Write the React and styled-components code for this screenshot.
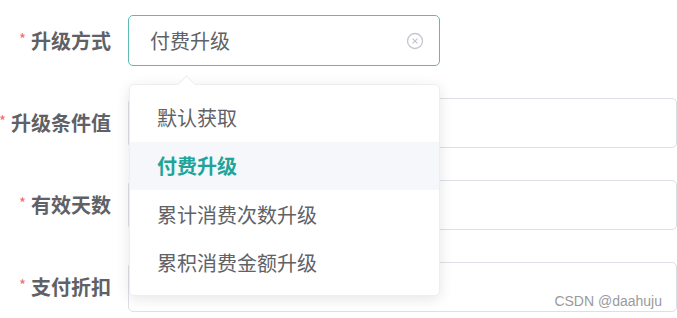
import styled, { createGlobalStyle } from "styled-components";

const GlobalStyle = createGlobalStyle`
  body {
    margin: 0;
    background: #fff;
    font-family: "Noto Sans CJK SC", "Noto Sans", sans-serif;
    overflow: hidden;
  }
`

const Page = styled.div`
  position: relative;
  width: 677px;
  height: 318px;
  overflow: hidden;
`
const Form = styled.div`
  display: flex;
  flex-direction: column;
  gap: 31px;
  padding-top: 15px;
`
const Row = styled.div`
  display: flex;
  align-items: center;
  height: 51px;
`
const Label = styled.div`
  width: 128px;
  flex-shrink: 0;
  padding-right: 17px;
  box-sizing: border-box;
  display: flex;
  justify-content: flex-end;
  align-items: center;
  font-size: 20px;
  font-weight: 700;
  color: #5f6166;
  white-space: nowrap;
`
const Star = styled.span`
  color: #f56c6c;
  font-size: 15px;
  font-weight: 400;
  margin-right: 5px;
  margin-top: -4px;
`
const SelectWrap = styled.div`
  position: relative;
`
const Input = styled.div`
  box-sizing: border-box;
  width: ${props => props.width ?? '600px'};
  height: ${props => props.height ?? '51px'};
  border: 1px solid ${props => props.focused ? '#5cbcb2' : '#dcdfe6'};
  border-radius: 5px;
  display: flex;
  align-items: center;
  justify-content: space-between;
  padding: 0 15px 0 21px;
  font-size: 20px;
  color: #606266;
`
const Clear = styled.svg`
  width: 18px;
  height: 18px;
`
const Dropdown = styled.ul`
  position: absolute;
  top: calc(100% + 18px);
  left: 1px;
  width: 311px;
  margin: 0;
  padding: 8px 0;
  list-style: none;
  background: #fff;
  border: 1px solid #eceef2;
  border-radius: 5px;
  box-sizing: border-box;
  box-shadow: 0 3px 14px rgba(0, 0, 0, 0.1);
  z-index: 10;

  &::before {
    content: "";
    position: absolute;
    top: -7px;
    left: 50px;
    width: 12px;
    height: 12px;
    background: #fff;
    border-left: 1px solid #eceef2;
    border-top: 1px solid #eceef2;
    transform: rotate(45deg);
  }
`
const Item = styled.li`
  position: relative;
  height: 48.5px;
  display: flex;
  align-items: center;
  padding-left: 27px;
  font-size: 20px;
  color: ${props => props.active ? '#1fa499' : '#606266'};
  font-weight: ${props => props.active ? 700 : 400};
  background: ${props => props.active ? '#f5f7fa' : 'transparent'};
`
const Watermark = styled.div`
  position: absolute;
  right: 15px;
  bottom: 9px;
  font-family: "Liberation Sans", Arial, sans-serif;
  font-size: 14px;
  color: #9a9a9a;
`

const options = ['默认获取', '付费升级', '累计消费次数升级', '累积消费金额升级']

export default function App() {
  return (
    <Page>
      <GlobalStyle />
      <Form>
        <Row>
          <Label><Star>*</Star>升级方式</Label>
          <SelectWrap>
            <Input width="312px" focused>
              付费升级
              <Clear viewBox="0 0 18 18">
                <circle cx="9" cy="9" r="7.5" fill="none" stroke="#c4c7cd" strokeWidth="1.3" />
                <path d="M6.6 6.6 L11.4 11.4 M11.4 6.6 L6.6 11.4" stroke="#c4c7cd" strokeWidth="1.3" />
              </Clear>
            </Input>
            <Dropdown>
              {options.map(opt => (
                <Item key={opt} active={opt === '付费升级'}>{opt}</Item>
              ))}
            </Dropdown>
          </SelectWrap>
        </Row>
        <Row>
          <Label><Star>*</Star>升级条件值</Label>
          <Input height="50px" />
        </Row>
        <Row>
          <Label><Star>*</Star>有效天数</Label>
          <Input height="50px" />
        </Row>
        <Row>
          <Label><Star>*</Star>支付折扣</Label>
          <Input height="50px" />
        </Row>
      </Form>
      <Watermark>CSDN @daahuju</Watermark>
    </Page>
  )
}
